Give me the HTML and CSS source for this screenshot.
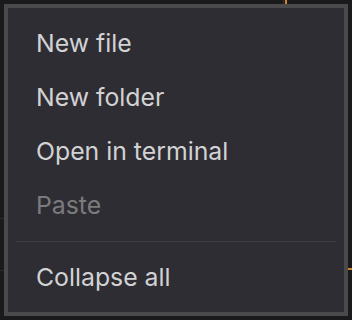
FILE: index.html
```html
<!DOCTYPE html>
<html>
<head>
<meta charset="utf-8">
<link rel="stylesheet" href="styles.css">
</head>
<body>
<div class="bg-mark mark-top"></div>
<div class="bg-mark mark-top-grey"></div>
<div class="bg-mark mark-right"></div>
<div class="bg-mark mark-left1"></div>
<div class="bg-mark mark-left2"></div>
<div class="menu">
  <div class="item">New file</div>
  <div class="item">New folder</div>
  <div class="item">Open in terminal</div>
  <div class="item disabled">Paste</div>
  <div class="divider"></div>
  <div class="item">Collapse all</div>
</div>
</body>
</html>
```
FILE: styles.css
```css
html, body {
  margin: 0;
  padding: 0;
  background: #1a1a1c;
  width: 352px;
  height: 320px;
  overflow: hidden;
}
body {
  position: relative;
  font-family: Inter, "Noto Sans", sans-serif;
}
.bg-mark {
  position: absolute;
}
.mark-top {
  left: 285px;
  top: 0;
  width: 2px;
  height: 4px;
  background: #d08a2c;
}
.mark-top-grey {
  left: 283px;
  top: 0;
  width: 1px;
  height: 4px;
  background: #333335;
}
.mark-right {
  left: 348px;
  top: 268px;
  width: 4px;
  height: 2px;
  background: #d08a2c;
}
.mark-left1 {
  left: 0;
  top: 218px;
  width: 4px;
  height: 1px;
  background: #2a2a2c;
}
.mark-left2 {
  left: 0;
  top: 270px;
  width: 4px;
  height: 1px;
  background: #2a2a2c;
}
.menu {
  position: relative;
  margin: 4px;
  width: 336px;
  height: 288px;
  border: 4px solid #4a4a4c;
  background: #2e2d33;
  padding: 8px 0;
  box-sizing: content-box;
  display: flex;
  flex-direction: column;
}
.item {
  height: 54px;
  display: flex;
  align-items: center;
  padding-left: 28px;
  font-size: 24.8px;
  color: #d2d2d4;
}
.item.disabled {
  color: #7b7b7e;
}
.divider {
  height: 1px;
  margin: 9px 8px 8px;
  background: #3e3e43;
}
```
